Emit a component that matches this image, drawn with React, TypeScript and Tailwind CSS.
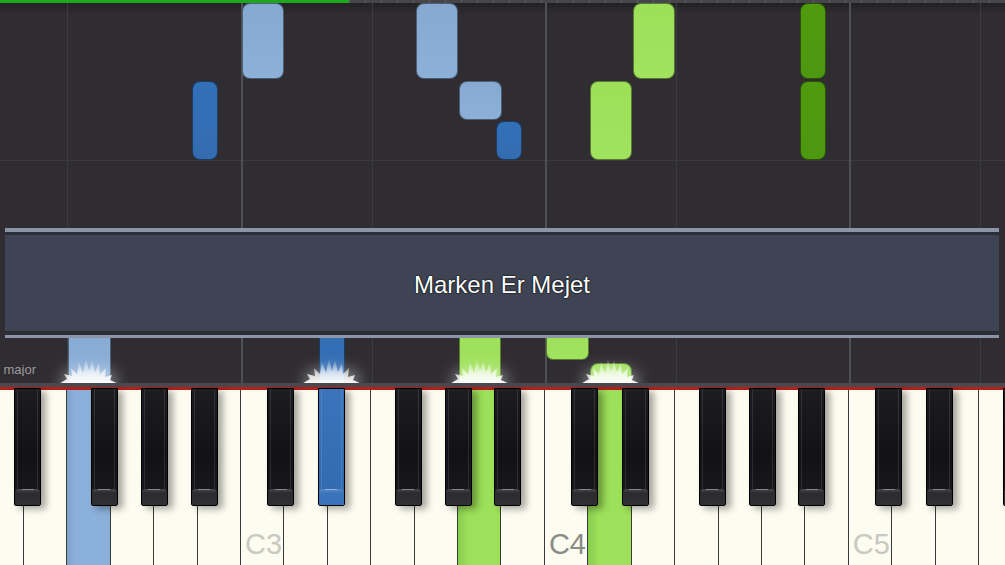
const notesTone: Record<string, string> = {
  lightBlue: "bg-[linear-gradient(180deg,#86a9d2,#8cb0d8)]",
  darkBlue: "bg-[linear-gradient(180deg,#3270b8,#356cb0)]",
  lightGreen: "bg-[linear-gradient(180deg,#9de058,#a1e25e)]",
  darkGreen: "bg-[linear-gradient(180deg,#4f9b0e,#4e9711)]",
};

type Note = { x: number; y: number; w: number; h: number; tone: string; round?: string };

const notes: Note[] = [
  { x: 242, y: 3, w: 42, h: 76, tone: "lightBlue" },
  { x: 192, y: 81, w: 25.5, h: 79, tone: "darkBlue" },
  { x: 415.5, y: 3, w: 42, h: 76, tone: "lightBlue" },
  { x: 459, y: 81, w: 42.5, h: 38.5, tone: "lightBlue" },
  { x: 496, y: 121, w: 25.5, h: 39, tone: "darkBlue" },
  { x: 589.5, y: 81, w: 42.5, h: 79, tone: "lightGreen" },
  { x: 632.5, y: 3, w: 42, h: 76, tone: "lightGreen" },
  { x: 800, y: 3, w: 25.5, h: 76, tone: "darkGreen" },
  { x: 800, y: 81, w: 25.5, h: 79, tone: "darkGreen" },
  // below the lyric banner
  { x: 67.8, y: 300, w: 42.8, h: 90, tone: "lightBlue", round: "rounded-none" },
  { x: 318.5, y: 300, w: 26.5, h: 90, tone: "darkBlue", round: "rounded-none" },
  { x: 458.6, y: 300, w: 42.8, h: 90, tone: "lightGreen", round: "rounded-none" },
  { x: 546, y: 300, w: 42.5, h: 59.5, tone: "lightGreen", round: "rounded-b-[7px]" },
  { x: 589.5, y: 362.5, w: 42.5, h: 30, tone: "lightGreen", round: "rounded-t-[8px]" },
];

const glows = [89, 331.5, 480, 610.5];

const WHITE_NAMES = ["C", "D", "E", "F", "G", "A", "B"];

// black key left offset inside the white key to its left
const BLACK_LEFT: Record<string, string> = {
  C: "left-[26.23px]",
  D: "left-[33.63px]",
  F: "left-[23.43px]",
  G: "left-[29.93px]",
  A: "left-[36.43px]",
};

const pressedWhite: Record<number, string> = {
  2: "bg-[linear-gradient(90deg,#7fa3cc,#8bb0d9_20%,#8bb0d9)]",
  11: "bg-[linear-gradient(90deg,#86cc4f,#9de059_25%,#9de059)]",
  14: "bg-[linear-gradient(90deg,#86cc4f,#9de059_25%,#9de059)]",
};

function Glow({ cx }: { cx: number }) {
  return (
    <div className="absolute top-[350px] h-[36px] w-[70px]" style={{ left: cx - 35 }}>
      <div className="absolute inset-x-[8px] bottom-[-8px] h-[24px] rounded-full bg-white/45 blur-[8px]" />
      <svg viewBox="0 0 70 36" className="absolute inset-0 h-full w-full">
        <defs>
          <linearGradient id={"g" + cx} x1="0" y1="0" x2="0" y2="1">
            <stop offset="0" stopColor="#ffffff" stopOpacity="0" />
            <stop offset="0.55" stopColor="#ffffff" stopOpacity="0.7" />
            <stop offset="1" stopColor="#ffffff" stopOpacity="1" />
          </linearGradient>
        </defs>
        <polygon
          fill={"url(#g" + cx + ")"}
          points="3,35 13,29 10,24 18,26 17,18 23,24 25,12 29,23 32,8 35,21 38,10 41,22 45,13 46,24 52,18 51,27 58,25 56,30 67,35"
        />
      </svg>
    </div>
  );
}

function Keyboard() {
  const keys = Array.from({ length: 24 }, (_, i) => {
    const name = WHITE_NAMES[(i + 1) % 7];
    const octave = 2 + Math.floor((i + 1) / 7);
    return { i, name, octave };
  });

  return (
    <div className="relative flex h-[175px] shrink-0 ml-[-19.6px]">
      {keys.map(({ i, name, octave }) => (
        <div
          key={i}
          className={
            "relative h-full w-[43.43px] shrink-0 border-r-[1.5px] border-[#3a3a38] " +
            (pressedWhite[i] ?? "bg-[#fdfcf0]")
          }
        >
          {name === "C" && (
            <span
              className={
                "absolute left-[4px] bottom-[6px] text-[29px] leading-none " +
                (octave === 4 ? "text-[#8b8b88]" : "text-[#c9c9c1]")
              }
            >
              C{octave}
            </span>
          )}
          {BLACK_LEFT[name] && (
            <div
              className={
                "absolute top-[-2px] z-10 h-[118px] w-[27px] overflow-hidden rounded-b-[2px] border border-black shadow-[5px_3px_7px_rgba(0,0,0,0.35)] " +
                BLACK_LEFT[name] +
                (i === 7
                  ? " bg-[linear-gradient(180deg,#3c74bb,#336bb1_85%,#5383c2)]"
                  : " bg-[linear-gradient(180deg,#1d1c1f,#121114_55%,#1a191c)]")
              }
            >
              <div className="absolute inset-y-0 left-[2px] w-px bg-white/10" />
              <div className="absolute inset-y-0 right-[2px] w-px bg-white/10" />
              <div
                className={
                  "absolute inset-x-0 bottom-0 h-[16px] rounded-t-[4px] " +
                  (i === 7
                    ? "bg-[linear-gradient(180deg,#5a88c6,#3a73ba_30%,#3a73ba)]"
                    : "bg-[linear-gradient(180deg,#4a494c,#2c2b2e_25%,#302f32)]")
                }
              />
              <div className="absolute bottom-[15px] left-1/2 h-px w-[12px] -translate-x-1/2 bg-white/35" />
            </div>
          )}
        </div>
      ))}
    </div>
  );
}

export default function App() {
  return (
    <div className="flex h-[565px] w-[1005px] flex-col overflow-hidden bg-[#2f2d31] font-['Liberation_Sans',Arial,sans-serif]">
      <div className="relative h-[383px] shrink-0 overflow-hidden">
        {/* progress bar */}
        <div className="absolute inset-x-0 top-0 z-20 flex h-[3px]">
          <div className="w-[349px] bg-[#1fa51f]" />
          <div className="flex-1 bg-[#464549] bg-[repeating-linear-gradient(90deg,#5c5b60_0_1px,transparent_1px_16px)]" />
        </div>
        <div className="absolute inset-x-0 top-[3px] h-[12px] bg-[linear-gradient(180deg,rgba(0,0,0,0.25),transparent)]" />

        {/* grid */}
        <div className="absolute inset-x-0 top-[160px] h-px bg-[#3b3a3e]" />
        {[67.4, 371.7, 675.7, 980].map((x) => (
          <div key={x} className="absolute top-0 bottom-0 w-px bg-[#3c3b3f]" style={{ left: x }} />
        ))}
        {[241, 545, 849].map((x) => (
          <div key={x} className="absolute top-0 bottom-0 w-[1.5px] bg-[#505054]" style={{ left: x }} />
        ))}

        {/* falling notes */}
        {notes.map((n, k) => (
          <div
            key={k}
            className={"absolute border border-black/45 " + (n.round ?? "rounded-[8px]") + " " + notesTone[n.tone]}
            style={{ left: n.x, top: n.y, width: n.w, height: n.h }}
          />
        ))}

        {glows.map((cx) => (
          <Glow key={cx} cx={cx} />
        ))}

        <div className="absolute left-0 top-[363px] flex w-[36px] justify-end overflow-hidden">
          <span className="shrink-0 whitespace-nowrap text-[13px] leading-none text-[#9d9c9f]">Eb major</span>
        </div>

        {/* lyric banner */}
        <div className="absolute left-[5px] right-[6px] top-[228px] z-10 flex h-[110px] flex-col">
          <div className="h-[4px] bg-[#8c94a7]" />
          <div className="h-[3px] bg-[#2a2e37]" />
          <div className="flex flex-1 items-center justify-center bg-[#3e4453] pt-[4px]">
            <span className="text-[24px] text-white [text-shadow:0_0_2px_#000,0_0_1px_#000]">Marken Er Mejet</span>
          </div>
          <div className="h-[4px] bg-[#2a2e37]" />
          <div className="h-[3px] bg-[#8c94a7]" />
        </div>
      </div>
      <div className="h-[4px] shrink-0 bg-[#4a494d]" />
      <div className="h-[3px] shrink-0 bg-[#b31f1b]" />
      <Keyboard />
    </div>
  );
}
